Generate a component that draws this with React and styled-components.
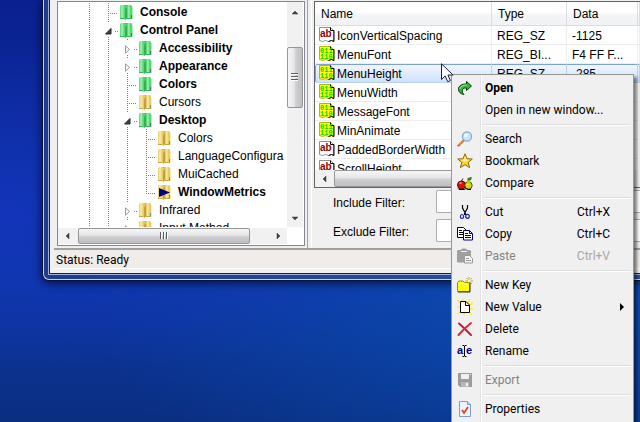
import React from "react";
import styled, { createGlobalStyle, css } from "styled-components";

const GlobalStyle = createGlobalStyle`
  * {
    box-sizing: border-box;
  }

  body {
    margin: 0;
    overflow: hidden;
    font-family: "Liberation Sans", Arial, sans-serif;
    font-size: 12px;
    color: #000;
  }

  button {
    border: none;
    padding: 0;
    background: none;
    font: inherit;
    color: inherit;
  }

  svg {
    display: block;
    flex: none;
  }
`;

const Desktop = styled.main`
  position: relative;
  height: 100vh;
  overflow: hidden;
  background: radial-gradient(
      ellipse at 0% 50%,
      rgba(20, 52, 190, 0.8),
      rgba(20, 52, 190, 0) 55%
    ),
    radial-gradient(
      ellipse at 95% 70%,
      rgba(12, 80, 180, 0.85),
      rgba(12, 80, 180, 0) 60%
    ),
    linear-gradient(180deg, #0a2090 0%, #0d38a8 65%, #0a2e80 100%);
`;

const AppWindow = styled.section`
  margin-left: 43px;
  padding: 0 0 4px 4px;
  border: 1px solid #c3d2ee;
  border-width: 0 0 1px 1px;
  border-bottom-left-radius: 6px;
  background: linear-gradient(90deg, #1f3c8c, #2c5696);
  box-shadow: 0 0 0 1px #04103c, 0 2px 10px 1px rgba(0, 0, 20, 0.75);
`;

const ClientFrame = styled.div`
  border: 1px solid #9fb2d8;
  border-width: 0 0 1px 1px;
`;

const Client = styled.div`
  padding: 0 0 4px 4px;
  border: 1px solid #16214a;
  border-width: 0 0 1px 1px;
  background: #f0f0f0;
`;

const Panes = styled.div`
  display: grid;
  grid-template-columns: 254px 1fr;
`;

const TreePane = styled.div`
  padding: 1px 2px 2px 3px;
  border-right: 1px solid #a0a0a0;
`;

const TreeBox = styled.div`
  display: grid;
  grid-template-columns: minmax(0, 1fr) 16px;
  grid-template-rows: 225px 16px;
  row-gap: 1px;
  padding: 0 1px 1px 0;
  border: 1px solid #828790;
  background: #fff;
`;

const TreeView = styled.div`
  overflow: hidden;
  padding: 1px 0 0 22px;
`;

const TreeRow = styled.div`
  display: flex;
  height: 18px;
  line-height: 18px;
  white-space: nowrap;
  font-weight: ${(props) => (props.$bold ? "bold" : "normal")};
`;

const dots = (angle) =>
  `repeating-linear-gradient(${angle}, #808080 0 1px, transparent 1px 2px)`;

const guides = {
  line: css`
    background: ${dots("180deg")} 9px 0 / 1px 100% no-repeat;
  `,
  tee: css`
    background: ${dots("180deg")} 9px 0 / 1px 100% no-repeat,
      ${dots("90deg")} 9px 10px / 10px 1px no-repeat;
  `,
  corner: css`
    background: ${dots("180deg")} 9px 0 / 1px 10px no-repeat,
      ${dots("90deg")} 9px 10px / 10px 1px no-repeat;
  `,
  toggle: css`
    background: ${dots("180deg")} 9px 0 / 1px 2px no-repeat,
      ${dots("180deg")} 9px 16px / 1px 2px no-repeat,
      ${dots("90deg")} 16px 10px / 3px 1px no-repeat;
  `,
};

const Guide = styled.span`
  display: flex;
  align-items: center;
  justify-content: center;
  flex: none;
  width: 19px;
  height: 18px;
  ${(props) => guides[props.$kind]}
`;

const ToggleButton = styled.button`
  display: flex;
  padding-top: 2px;
`;

const FolderSlot = styled.span`
  flex: none;
  width: 22px;
  padding: 1px 0 0 2px;
`;

const ScrollTrack = styled.div`
  display: flex;
  flex-direction: ${(props) => (props.$vertical ? "column" : "row")};
  background: #f1f1f1;
`;

const ScrollButton = styled.button`
  display: flex;
  align-items: center;
  justify-content: center;
  flex: 0 0 19px;
`;

const ScrollGap = styled.div`
  flex: ${(props) => props.$size} 1 0;
`;

const ScrollThumb = styled.div`
  display: flex;
  align-items: center;
  justify-content: center;
  flex: ${(props) => props.$size} 1 0;
  border: 1px solid #979797;
  border-radius: 2px;
  background: linear-gradient(
    ${(props) => (props.$vertical ? "90deg" : "180deg")},
    #f6f6f6 0%,
    #e6e6e8 45%,
    #cfcfd2 55%,
    #bfbfc3 100%
  );
`;

const ListPane = styled.div`
  min-width: 0;
  margin-left: 3px;
  padding: 1px 0 0 2px;
  border-left: 1px solid #fff;
`;

const ListBox = styled.div`
  border: 1px solid #646464;
  border-right: none;
  background: #fff;
`;

const ListView = styled.div`
  height: 168px;
  overflow: hidden;
`;

const ListScroll = styled.div`
  display: grid;
  height: 17px;
`;

const ValueTable = styled.table`
  width: 100%;
  table-layout: fixed;
  border-collapse: separate;
  border-spacing: 0;
`;

const Column = styled.col`
  width: ${(props) => props.$size};
`;

const HeadCell = styled.th`
  height: 24px;
  padding: 0 0 0 6px;
  border: 1px solid #dcdde0;
  border-width: 0 1px 1px 0;
  background: linear-gradient(#fff 45%, #f4f5f7 55%, #f1f2f4);
  font-weight: normal;
  text-align: left;
`;

const ValueRow = styled.tr`
  & td {
    height: 19px;
    padding: 0 0 0 5px;
    border: 1px solid #ededed;
    border-width: 0 1px 1px 0;
    line-height: 18px;
    white-space: nowrap;
  }

  & td:first-child {
    padding-left: 4px;
  }

  ${(props) =>
    props.$selected &&
    css`
      & td {
        border-color: #b8d2f2;
        background: linear-gradient(#7da2ce 1px, #f0f6fe 1px, #cfe2fb);
      }

      & td:first-child {
        border-left: 1px solid #7da2ce;
        border-radius: 3px 0 0 3px;
        padding-left: 3px;
      }
    `}
`;

const CellText = styled.span`
  display: flex;
  gap: 2px;
  height: 18px;
  line-height: 20px;
`;

const Filters = styled.div`
  display: grid;
  grid-template-columns: 103px 1fr;
  gap: 6px 0;
  padding: 2px 0 6px 19px;
`;

const FilterLabel = styled.label`
  align-self: center;
  padding-top: 2px;
`;

const FilterInput = styled.input`
  min-width: 0;
  width: 100%;
  height: 23px;
  border: 1px solid #abadb3;
  border-right: none;
  border-radius: 2px 0 0 2px;
  background: #fff;
  font: inherit;
`;

const StatusBar = styled.footer`
  border-top: 2px solid #a0a0a0;
  border-bottom: 1px solid #fff;
  padding-left: 2px;
  background: #f0ecea;
  font-family: Roboto, "Open Sans", sans-serif;
  line-height: 20px;
  height: 21px;
`;

const Menu = styled.ul`
  position: absolute;
  left: 451px;
  top: 74px;
  width: 183px;
  margin: 0;
  padding: 2px;
  list-style: none;
  border: 1px solid #979797;
  background: linear-gradient(
      90deg,
      transparent 28px,
      #e2e3e3 28px 29px,
      #fff 29px 30px,
      transparent 30px
    )
    #f0f0f0;
  box-shadow: 3px 3px 3px rgba(0, 0, 0, 0.5);
  font-family: Roboto, "Open Sans", sans-serif;
`;

const MenuButton = styled.button`
  display: grid;
  grid-template-columns: 31px 1fr auto 21px;
  align-items: center;
  width: 100%;
  height: 22px;
  text-align: left;
  white-space: nowrap;
  font-weight: ${(props) => (props.$strong ? "bold" : "normal")};

  &:disabled {
    color: #838383;
  }
`;

const IconSlot = styled.span`
  padding-left: 3px;
`;

const Shortcut = styled.span`
  grid-column: 3;

  ${MenuButton}:disabled & {
    color: #a6a6a6;
  }
`;

const SubmenuMark = styled.span`
  grid-column: 4;
  justify-self: end;
  padding-right: 7px;
`;

const Separator = styled.li`
  height: 7px;
  margin-left: 29px;
  background: linear-gradient(
    transparent 3px,
    #dcdcdc 3px 4px,
    #fff 4px 5px,
    transparent 5px
  );
`;

const Pointer = styled.div`
  position: absolute;
  left: 441px;
  top: 63px;
`;

const FolderIcon = ({ green, current }) => {
  const id = green ? "green" : "yellow";
  const [edge, light, mid, dark, tab] = green
    ? ["#38b858", "#a4f2b2", "#58d874", "#2ca84c", "#8a3fc0"]
    : ["#c8a848", "#faeeac", "#e8cc68", "#bc9430", "#3f9ad8"];
  return (
    <svg width="15" height="16" viewBox="0 0 15 16">
      <defs>
        <linearGradient id={`${id}-front`}>
          <stop offset="0" stopColor={mid} />
          <stop offset=".3" stopColor={light} />
          <stop offset=".6" stopColor={mid} />
          <stop offset="1" stopColor={mid} />
        </linearGradient>
        <linearGradient id={`${id}-back`}>
          <stop offset="0" stopColor={dark} />
          <stop offset=".35" stopColor={mid} />
          <stop offset=".55" stopColor={light} />
          <stop offset=".75" stopColor={mid} />
          <stop offset="1" stopColor={mid} />
        </linearGradient>
      </defs>
      <path d="M5 1h6l1 1v13H5z" fill={`url(#${id}-back)`} />
      <path d="M12 3h1v12h-1z" fill={light} />
      <path d="M0 2l1-1h4l2 2v11l-2 2-1-1H0z" fill={`url(#${id}-front)`} />
      <path d="M6 3l1 1v10l-2 2V6z" fill={dark} opacity=".8" />
      <path d="M0 14h4v1H0zM7 14h5v1H7z" fill={edge} />
      <path d="M11 11h1v3h-1z" fill={tab} />
      {current && <path d="M1 4l11 4.500L1 13z" fill="#000080" />}
    </svg>
  );
};

const Toggle = ({ open, label }) => (
  <ToggleButton aria-label={`Toggle ${label}`} aria-expanded={open}>
    <svg width="7" height="9" viewBox="0 0 7 9">
      {open ? (
        <path d="M6 1.500V7H.5z" fill="#404040" stroke="#262626" />
      ) : (
        <path d="M1.500.8v7.400l4-3.700z" fill="#fff" stroke="#989898" />
      )}
    </svg>
  </ToggleButton>
);

const arrows = {
  up: "M1 6l3-3 3 3z",
  down: "M1 3h6L4 6z",
  left: "M5 1v6L2 4z",
  right: "M3 1v6l3-3z",
};

const ScrollArrow = ({ dir }) => (
  <ScrollButton aria-label={`Scroll ${dir}`}>
    <svg width="8" height="8" viewBox="0 0 8 8">
      <path d={arrows[dir]} fill="#404040" stroke="#404040" strokeWidth=".5" />
    </svg>
  </ScrollButton>
);

const Grip = ({ vertical }) => (
  <svg width="8" height="8" viewBox="0 0 8 8" shapeRendering="crispEdges">
    <path
      d={
        vertical
          ? "M0 .5h7M0 3.500h7M0 6.500h7"
          : "M.5 0v7M3.500 0v7M6.500 0v7"
      }
      stroke="#5c5c60"
    />
    <path
      d={
        vertical
          ? "M0 1.500h7M0 4.500h7M0 7.500h7"
          : "M1.500 0v7M4.500 0v7M7.500 0v7"
      }
      stroke="#fff"
    />
  </svg>
);

const ScrollBar = ({ vertical, before, thumb, after }) => (
  <ScrollTrack $vertical={vertical}>
    <ScrollArrow dir={vertical ? "up" : "left"} />
    <ScrollGap $size={before} />
    <ScrollThumb $size={thumb} $vertical={vertical}>
      <Grip vertical={vertical} />
    </ScrollThumb>
    <ScrollGap $size={after} />
    <ScrollArrow dir={vertical ? "down" : "right"} />
  </ScrollTrack>
);

const ValueIcon = ({ binary }) => (
  <svg width="16" height="18" viewBox="0 0 16 18">
    <path
      d="M.5 1.500h11l3 3v11l-2-1-3 1-3-1-3 1-3-1z"
      fill={binary ? "#ffff00" : "#fff"}
      stroke={binary ? "#b8b800" : "#909090"}
    />
    <path d="M11.500 1.500v3h3.500v11l-2.500-1-3 1" fill="none" stroke="#000" />
    {binary ? (
      <g
        fill="#00d800"
        fontFamily="Liberation Mono, monospace"
        fontWeight="bold"
        fontSize="7"
      >
        <text x="1" y="8">
          011
        </text>
        <text x="1" y="14">
          110
        </text>
      </g>
    ) : (
      <text
        x="1"
        y="11"
        fill="#900000"
        fontFamily="Liberation Sans, sans-serif"
        fontWeight="bold"
        fontSize="10"
      >
        ab
      </text>
    )}
  </svg>
);

const icons = {
  open: (
    <>
      <path
        d="M9.500 1.500l5 4.500-5 4.500V8C6.500 7.800 5.200 9 5.200 11c0 1.500.8 2.500 1.800 3.500C3.500 14 1.500 12 1.500 9.200 1.500 5.800 4.500 4 9.500 4z"
        fill="#35b83a"
        stroke="#06400a"
      />
      <path d="M3 9c.3-2.500 2.500-4 7-4" fill="none" stroke="#a8f0a0" />
    </>
  ),
  search: (
    <>
      <path d="M1.500 14.500l5-5" stroke="#c06c38" strokeWidth="2.400" strokeLinecap="round" />
      <path d="M1.500 14l4.500-4.500" stroke="#f4c090" strokeWidth=".9" />
      <circle cx="10" cy="5.500" r="4.600" fill="#bfe6fb" stroke="#8aa6cc" strokeWidth="1.200" />
      <circle cx="9" cy="4.500" r="2" fill="#f2fbff" />
    </>
  ),
  bookmark: (
    <>
      <path
        d="M8 .8l2 4.900 5.300.3-4.100 3.400 1.400 5.200L8 11.700l-4.600 2.900 1.400-5.200L.7 6 6 5.700z"
        fill="#ffd030"
        stroke="#906808"
        strokeLinejoin="round"
      />
      <path d="M8 3l1.200 3.400L12 7 8 9 4 7l2.800-.6z" fill="#fff3a0" />
    </>
  ),
  compare: (
    <>
      <circle cx="4.500" cy="10" r="4" fill="#e01010" stroke="#600000" />
      <path d="M2.500 8h2" stroke="#fff" />
      <path d="M4.500 6L6 3.500" stroke="#402000" />
      <circle cx="11.500" cy="10.500" r="3.700" fill="#d8d800" stroke="#505000" />
      <circle cx="11.500" cy="6.500" r="2" fill="#c8c800" />
      <path d="M9.500 9.500h2" stroke="#ffffb0" />
      <path d="M10 4l2-1.500L15 2l-1 3-3 .5z" fill="#208818" />
      <path d="M1 13.500l1 1h5l2-1 2 1h3" fill="none" stroke="#000" />
    </>
  ),
  cut: (
    <>
      <path d="M5.500 1v3l3 5.500M10.500 1v3l-3 5.500" fill="none" stroke="#000" strokeWidth="1.200" />
      <path d="M7 9h2v2H7z" fill="#000080" />
      <ellipse cx="5" cy="12.500" rx="1.600" ry="2" fill="none" stroke="#20209c" strokeWidth="1.200" />
      <ellipse cx="10.500" cy="12.300" rx="1.800" ry="2" fill="none" stroke="#20209c" strokeWidth="1.200" />
    </>
  ),
  copy: (
    <>
      <path d="M.5 1.500h6l2.500 2.500v7.500H.5z" fill="#fff" stroke="#000" />
      <path d="M2 4.500h3M2 6.500h4M2 8.500h4" stroke="#000" />
      <path d="M6.500 4.500h6L15.500 7.500v6.500h-9z" fill="#fff" stroke="#000080" />
      <path d="M12.500 4.500v3h3M8 7.500h3M8 9.500h6M8 11.500h6" fill="none" stroke="#000080" />
    </>
  ),
  paste: (
    <>
      <path d="M0 3l1-1h3l1-1.500h4L10 2h3l1 1v11l-1 .500H1L0 14z" fill="#a0a0a0" />
      <path d="M4 3.500h6" stroke="#f0f0f0" />
      <path d="M7.500 7.500h5l3 3v4.500h-8z" fill="#f4f4f4" stroke="#9a9a9a" />
      <path d="M9 10.500h3M9 12.500h5" stroke="#9a9a9a" />
    </>
  ),
  newKey: (
    <>
      <path d="M.5 14.500v-9L2 4h4l1.500 1.500h5v9z" fill="#ffff00" stroke="#a09000" />
      <path d="M13 5.500v9.500H1" fill="none" stroke="#303000" />
      <path d="M2 7h9" stroke="#ffffb8" />
      <path d="M12 0v2.500M12 5v2.500M8.500 4H11M13.500 4H16M9.500 1l1.500 1.500M15 1l-1.500 1.500M15 7l-1.500-1.500" stroke="#c8a800" />
    </>
  ),
  newValue: (
    <>
      <path d="M0 1l4 3M6 0v3M13 0l-2 4M16 4l-3 2M0 8h3M16 10h-3M1 15l3-3M7 16v-3M15 16l-3-3" stroke="#ffee20" strokeWidth="1.600" />
      <path d="M3.500 2.500H9L12.500 6v7.500h-9z" fill="#fff" stroke="#000" />
      <path d="M8.500 2.500v4h4" fill="none" stroke="#000" />
    </>
  ),
  remove: (
    <>
      <path d="M2 2.500C6 6 10 10 14 14" stroke="#c81830" strokeWidth="2" strokeLinecap="round" />
      <path d="M14 2C9 6 5 10 1.500 14" stroke="#dc2840" strokeWidth="2" strokeLinecap="round" />
    </>
  ),
  rename: (
    <>
      <g
        fill="#000080"
        fontFamily="Liberation Sans, sans-serif"
        fontWeight="bold"
        fontSize="11"
      >
        <text x="0" y="11">
          a
        </text>
        <text x="9" y="11">
          e
        </text>
      </g>
      <path d="M5.500 2.500H7l.5 1 .5-1h1.500M7.500 3v10M5.500 13.500H7l.5-1 .5 1h1.500" fill="none" stroke="#000" />
    </>
  ),
  exportFile: (
    <>
      <path d="M1 1h14v14H3l-2-2z" fill="#9c9c9c" />
      <path d="M4 2h8v5H4z" fill="#f0f0f0" />
      <path d="M4 10h8v5H4z" fill="#b8b8b8" />
      <path d="M9 11h2v3H9z" fill="#f0f0f0" />
      <path d="M13 2h1v1h-1z" fill="#fff" />
    </>
  ),
  properties: (
    <>
      <path d="M2.500.5h8l3 3v12h-11z" fill="#eaf2fc" stroke="#7f9fc8" />
      <path d="M10.500.5v3h3" fill="#b8d0f0" stroke="#7f9fc8" />
      <path d="M5 9l2 3 4-6" fill="none" stroke="#e04020" strokeWidth="1.800" />
    </>
  ),
};

const MenuIcon = ({ name }) => (
  <svg width="16" height="16" viewBox="0 0 16 16">
    {icons[name]}
  </svg>
);

const tree = [
  { label: "Console", guides: ["line", "tee"], green: true },
  { label: "Control Panel", guides: ["line", "toggle"], green: true, open: true },
  { label: "Accessibility", guides: ["line", "line", "toggle"], green: true },
  { label: "Appearance", guides: ["line", "line", "toggle"], green: true },
  { label: "Colors", guides: ["line", "line", "tee"], green: true },
  { label: "Cursors", guides: ["line", "line", "tee"] },
  { label: "Desktop", guides: ["line", "line", "toggle"], green: true, open: true },
  { label: "Colors", guides: ["line", "line", "line", "tee"] },
  { label: "LanguageConfigura", guides: ["line", "line", "line", "tee"] },
  { label: "MuiCached", guides: ["line", "line", "line", "tee"] },
  {
    label: "WindowMetrics",
    guides: ["line", "line", "line", "corner"],
    current: true,
  },
  { label: "Infrared", guides: ["line", "line", "toggle"] },
  { label: "Input Method", guides: ["line", "line", "toggle"] },
];

const values = [
  { name: "IconVerticalSpacing", type: "REG_SZ", data: "-1125" },
  { name: "MenuFont", type: "REG_BI...", data: "F4 FF F...", binary: true },
  { name: "MenuHeight", type: "REG_SZ", data: "-285", binary: true, selected: true },
  { name: "MenuWidth", binary: true },
  { name: "MessageFont", binary: true },
  { name: "MinAnimate", binary: true },
  { name: "PaddedBorderWidth" },
  { name: "ScrollHeight" },
];

const menuGroups = [
  [
    { label: "Open", icon: "open", strong: true },
    { label: "Open in new window..." },
  ],
  [
    { label: "Search", icon: "search" },
    { label: "Bookmark", icon: "bookmark" },
    { label: "Compare", icon: "compare" },
  ],
  [
    { label: "Cut", icon: "cut", shortcut: "Ctrl+X" },
    { label: "Copy", icon: "copy", shortcut: "Ctrl+C" },
    { label: "Paste", icon: "paste", shortcut: "Ctrl+V", disabled: true },
  ],
  [
    { label: "New Key", icon: "newKey" },
    { label: "New Value", icon: "newValue", submenu: true },
    { label: "Delete", icon: "remove" },
    { label: "Rename", icon: "rename" },
  ],
  [{ label: "Export", icon: "exportFile", disabled: true }],
  [{ label: "Properties", icon: "properties" }],
];

const RegistryTree = () => (
  <TreePane>
    <TreeBox>
      <TreeView role="tree" aria-label="Registry keys">
        {tree.map((node, index) => (
          <TreeRow
            key={index}
            role="treeitem"
            aria-level={node.guides.length}
            $bold={node.green || node.current}
          >
            {node.guides.map((kind, level) => (
              <Guide key={level} $kind={kind}>
                {kind === "toggle" && (
                  <Toggle open={!!node.open} label={node.label} />
                )}
              </Guide>
            ))}
            <FolderSlot>
              <FolderIcon green={node.green} current={node.current} />
            </FolderSlot>
            {node.label}
          </TreeRow>
        ))}
      </TreeView>
      <ScrollBar vertical before={26} thumb={60} after={101} />
      <ScrollBar before={1} thumb={172} after={18} />
    </TreeBox>
  </TreePane>
);

const ValueList = () => (
  <ListBox>
    <ListView>
      <ValueTable>
        <colgroup>
          <Column $size="177px" />
          <Column $size="75px" />
          <Column $size="71px" />
          <Column $size="auto" />
        </colgroup>
        <thead>
          <tr>
            <HeadCell>Name</HeadCell>
            <HeadCell>Type</HeadCell>
            <HeadCell>Data</HeadCell>
            <HeadCell />
          </tr>
        </thead>
        <tbody>
          {values.map((value) => (
            <ValueRow key={value.name} $selected={value.selected}>
              <td>
                <CellText>
                  <ValueIcon binary={value.binary} />
                  {value.name}
                </CellText>
              </td>
              <td>
                <CellText>{value.type}</CellText>
              </td>
              <td>
                <CellText>{value.data}</CellText>
              </td>
              <td />
            </ValueRow>
          ))}
        </tbody>
      </ValueTable>
    </ListView>
    <ListScroll>
      <ScrollBar before={0} thumb={1} after={0} />
    </ListScroll>
  </ListBox>
);

const ContextMenu = () => (
  <Menu role="menu">
    {menuGroups.map((group, index) => (
      <React.Fragment key={index}>
        {index > 0 && <Separator role="separator" />}
        {group.map((item) => (
          <li key={item.label} role="none">
            <MenuButton
              role="menuitem"
              disabled={item.disabled}
              $strong={item.strong}
            >
              <IconSlot>{item.icon && <MenuIcon name={item.icon} />}</IconSlot>
              <span>{item.label}</span>
              {item.shortcut && <Shortcut>{item.shortcut}</Shortcut>}
              {item.submenu && (
                <SubmenuMark>
                  <svg width="4" height="8" viewBox="0 0 4 8">
                    <path d="M0 0l4 4-4 4z" />
                  </svg>
                </SubmenuMark>
              )}
            </MenuButton>
          </li>
        ))}
      </React.Fragment>
    ))}
  </Menu>
);

const App = () => {
  return (
    <>
      <GlobalStyle />
      <Desktop>
        <AppWindow>
          <ClientFrame>
            <Client>
              <Panes>
                <RegistryTree />
                <ListPane>
                  <ValueList />
                  <Filters>
                    <FilterLabel htmlFor="include">Include Filter:</FilterLabel>
                    <FilterInput id="include" type="text" />
                    <FilterLabel htmlFor="exclude">Exclude Filter:</FilterLabel>
                    <FilterInput id="exclude" type="text" />
                  </Filters>
                </ListPane>
              </Panes>
              <StatusBar>Status: Ready</StatusBar>
            </Client>
          </ClientFrame>
        </AppWindow>
        <ContextMenu />
        <Pointer>
          <svg width="13" height="20" viewBox="0 0 13 20">
            <path
              d="M.5.8v15.700l3.700-3.500 2.500 5.700 2.600-1.100-2.400-5.600h5.200z"
              fill="#fff"
              stroke="#1c1c3c"
            />
          </svg>
        </Pointer>
      </Desktop>
    </>
  );
};

export default App;
